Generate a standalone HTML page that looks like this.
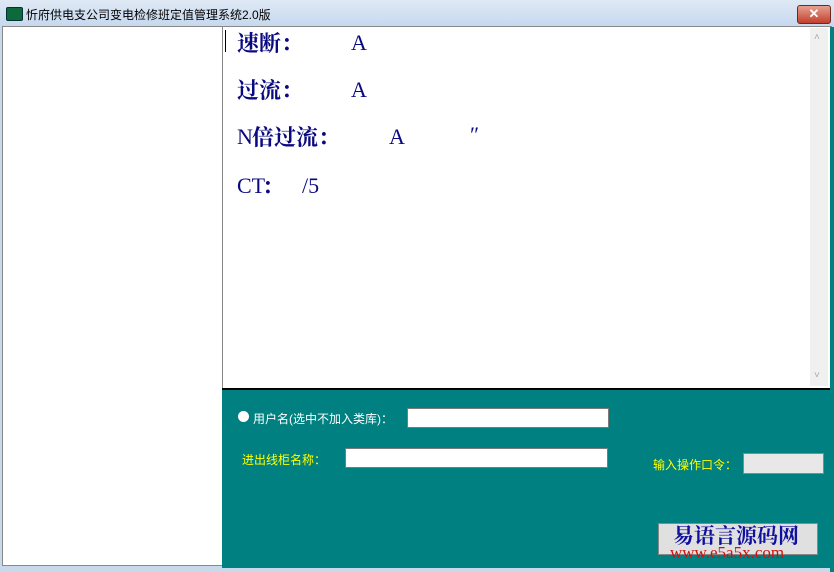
<!DOCTYPE html>
<html><head><meta charset="utf-8"><style>
body{margin:0;width:834px;height:572px;overflow:hidden;background:#c9d9ec;font-family:"Liberation Sans","Noto Sans CJK SC",sans-serif;position:relative}
.abs{position:absolute}
.title{left:0;top:0;width:834px;height:27px;background:linear-gradient(#dfe9f5,#c6d8ee)}
.tt{left:26px;top:6px;font-size:12px;color:#000}
.big{font-family:"Noto Serif CJK SC",serif;font-size:22px;color:#0a0a80;font-weight:bold;line-height:26px}
.m{font-family:"Liberation Serif",serif;font-size:22px;color:#0a0a80;line-height:26px}
.inp{background:#fff;border:1px solid #7a7a7a}
.y{color:#ffff00;font-size:12px}
</style></head><body>
<div class="abs title"></div>
<div class="abs" style="left:6px;top:7px;width:15px;height:12px;background:#0e6a3a;border:1px solid #033;border-radius:2px"></div>
<div class="abs tt">忻府供电支公司变电检修班定值管理系统2.0版</div>
<div class="abs" style="left:797px;top:5px;width:32px;height:17px;background:linear-gradient(#e8a090,#c0402c);border:1px solid #6b2a20;border-radius:3px;color:#fff;font-size:13px;text-align:center;line-height:16px;font-weight:bold">✕</div>
<div class="abs" style="left:2px;top:26px;width:220px;height:538px;background:#fff;border:1px solid #888"></div>
<div class="abs" style="left:222px;top:26px;width:608px;height:362px;background:#fff;border:1px solid #888"></div>
<div class="abs" style="left:810px;top:28px;width:18px;height:358px;background:#f0f0f0"></div>
<div class="abs" style="left:814px;top:32px;color:#aaa;font-size:10px">˄</div>
<div class="abs" style="left:814px;top:370px;color:#aaa;font-size:10px">˅</div>
<div class="abs" style="left:225px;top:30px;width:1px;height:22px;background:#000"></div>
<div class="abs big" style="left:237px;top:30px">速断：</div><div class="abs m" style="left:351px;top:30px">A</div>
<div class="abs big" style="left:237px;top:77px">过流：</div><div class="abs m" style="left:351px;top:77px">A</div>
<div class="abs m" style="left:237px;top:124px">N</div><div class="abs big" style="left:252px;top:124px">倍过流：</div><div class="abs m" style="left:389px;top:124px">A</div><div class="abs m" style="left:470px;top:122px">″</div>
<div class="abs m" style="left:237px;top:173px">CT</div><div class="abs big" style="left:262px;top:173px">：</div><div class="abs m" style="left:302px;top:173px">/5</div>
<div class="abs" style="left:222px;top:388px;width:608px;height:2px;background:#000"></div>
<div class="abs" style="left:222px;top:390px;width:608px;height:178px;background:#008080"></div>
<div class="abs" style="right:0;top:27px;width:4px;height:545px;background:#008080"></div>
<div class="abs" style="left:238px;top:411px;width:11px;height:11px;background:#fff;border-radius:50%"></div>
<div class="abs" style="left:253px;top:410px;font-size:12px;color:#fff">用户名(选中不加入类库)：</div>
<div class="abs inp" style="left:407px;top:408px;width:200px;height:18px"></div>
<div class="abs y" style="left:242px;top:451px">进出线柜名称：</div>
<div class="abs inp" style="left:345px;top:448px;width:261px;height:18px"></div>
<div class="abs y" style="left:653px;top:456px">输入操作口令：</div>
<div class="abs" style="left:743px;top:453px;width:79px;height:19px;background:#e8e8e8;border:1px solid #888"></div>
<div class="abs" style="left:658px;top:523px;width:158px;height:30px;background:#e0e0e0;border:1px solid #888"></div>
<div class="abs" style="left:673px;top:521px;font-family:'Noto Serif CJK SC',serif;font-size:21px;color:#1010a0;font-weight:bold;line-height:28px">易语言源码网</div>
<div class="abs" style="left:670px;top:543px;font-family:'Liberation Serif',serif;font-size:17px;color:#d01010;line-height:20px">www.e5a5x.com</div>
</body></html>
